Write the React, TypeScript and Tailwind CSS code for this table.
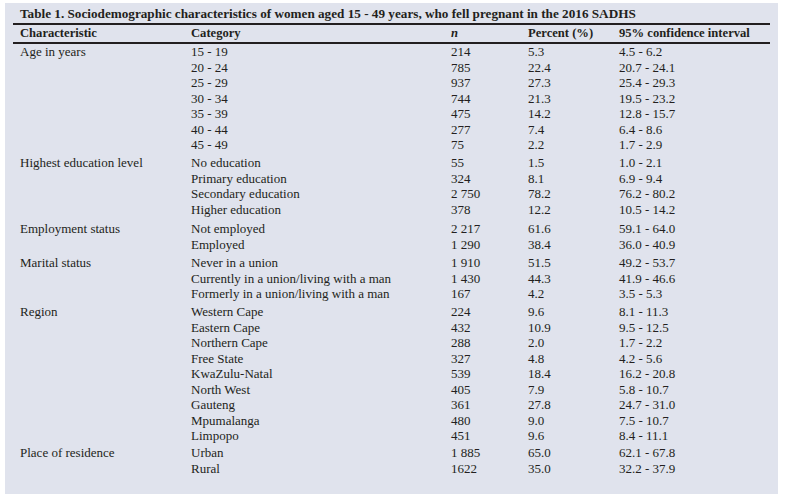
import React from "react";

type Group = { name: string; rows: [string, string, string, string][]; mt: string };

const groups: Group[] = [
  {
    name: "Age in years",
    mt: "mt-0",
    rows: [
      ["15 - 19", "214", "5.3", "4.5 - 6.2"],
      ["20 - 24", "785", "22.4", "20.7 - 24.1"],
      ["25 - 29", "937", "27.3", "25.4 - 29.3"],
      ["30 - 34", "744", "21.3", "19.5 - 23.2"],
      ["35 - 39", "475", "14.2", "12.8 - 15.7"],
      ["40 - 44", "277", "7.4", "6.4 - 8.6"],
      ["45 - 49", "75", "2.2", "1.7 - 2.9"],
    ],
  },
  {
    name: "Highest education level",
    mt: "mt-[2.5px]",
    rows: [
      ["No education", "55", "1.5", "1.0 - 2.1"],
      ["Primary education", "324", "8.1", "6.9 - 9.4"],
      ["Secondary education", "2 750", "78.2", "76.2 - 80.2"],
      ["Higher education", "378", "12.2", "10.5 - 14.2"],
    ],
  },
  {
    name: "Employment status",
    mt: "mt-[4px]",
    rows: [
      ["Not employed", "2 217", "61.6", "59.1 - 64.0"],
      ["Employed", "1 290", "38.4", "36.0 - 40.9"],
    ],
  },
  {
    name: "Marital status",
    mt: "mt-[3px]",
    rows: [
      ["Never in a union", "1 910", "51.5", "49.2 - 53.7"],
      ["Currently in a union/living with a man", "1 430", "44.3", "41.9 - 46.6"],
      ["Formerly in a union/living with a man", "167", "4.2", "3.5 - 5.3"],
    ],
  },
  {
    name: "Region",
    mt: "mt-[2.5px]",
    rows: [
      ["Western Cape", "224", "9.6", "8.1 - 11.3"],
      ["Eastern Cape", "432", "10.9", "9.5 - 12.5"],
      ["Northern Cape", "288", "2.0", "1.7 - 2.2"],
      ["Free State", "327", "4.8", "4.2 - 5.6"],
      ["KwaZulu-Natal", "539", "18.4", "16.2 - 20.8"],
      ["North West", "405", "7.9", "5.8 - 10.7"],
      ["Gauteng", "361", "27.8", "24.7 - 31.0"],
      ["Mpumalanga", "480", "9.0", "7.5 - 10.7"],
      ["Limpopo", "451", "9.6", "8.4 - 11.1"],
    ],
  },
  {
    name: "Place of residence",
    mt: "mt-[1.5px]",
    rows: [
      ["Urban", "1 885", "65.0", "62.1 - 67.8"],
      ["Rural", "1622", "35.0", "32.2 - 37.9"],
    ],
  },
];

const cols = "grid grid-cols-[171px_260px_77px_91px_1fr]";

export default function App() {
  return (
    <div className="w-[785px] h-[498px] bg-white pt-[3px] pl-[5px]">
      <div className="w-[773px] h-[491px] bg-[#e0e3ed] px-[8px] text-[#231f20] text-[13px] font-['Liberation_Serif',serif]">
        <div className="pl-[7px] pt-[2px] h-[20px] font-bold text-[13.2px] leading-[17px] whitespace-nowrap">
          Table 1. Sociodemographic characteristics of women aged 15 - 49 years, who fell pregnant in the 2016 SADHS
        </div>
        <div className="border-t-2 border-[#231f20]" />
        <div className={`${cols} pl-[7px] h-[17px] leading-[16px] font-bold text-[12.6px]`}>
          <div>Characteristic</div>
          <div>Category</div>
          <div className="italic">n</div>
          <div>Percent (%)</div>
          <div>95% confidence interval</div>
        </div>
        <div className="border-t-2 border-[#231f20]" />
        <div>
          {groups.map((g) => (
            <div key={g.name} className={g.mt}>
              {g.rows.map((r, i) => (
                <div key={r[0]} className={`${cols} pl-[7px] h-[15.5px] leading-[15.5px]`}>
                  <div>{i === 0 ? g.name : ""}</div>
                  <div>{r[0]}</div>
                  <div>{r[1]}</div>
                  <div>{r[2]}</div>
                  <div>{r[3]}</div>
                </div>
              ))}
            </div>
          ))}
        </div>
      </div>
    </div>
  );
}
